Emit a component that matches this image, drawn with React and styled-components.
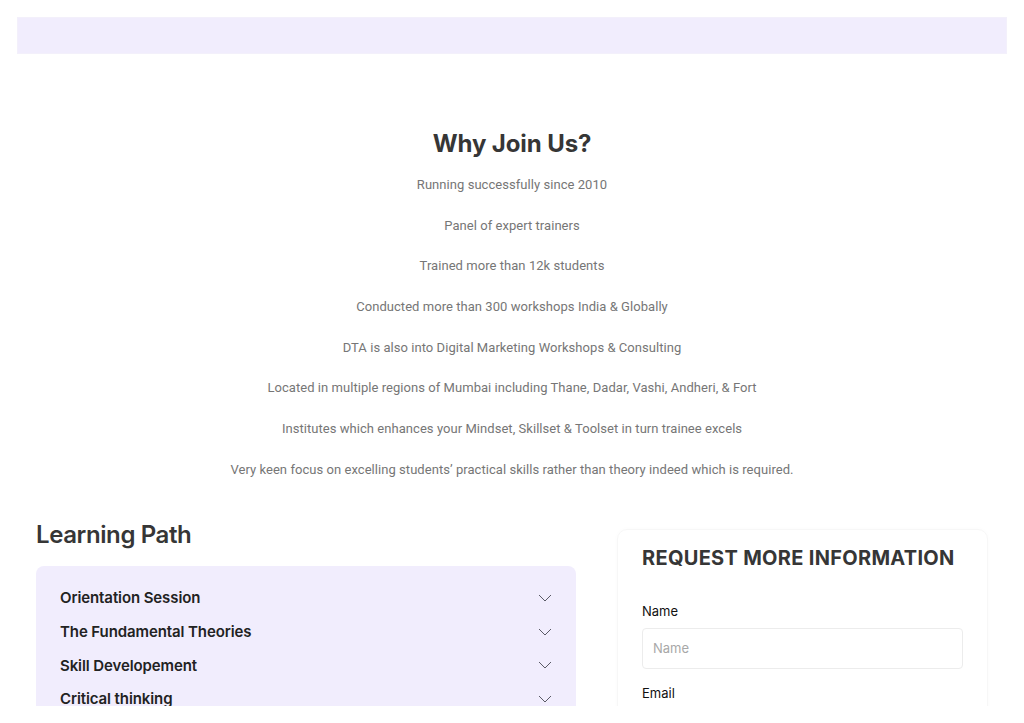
import React from 'react'
import styled, { createGlobalStyle } from 'styled-components';

const Global = createGlobalStyle`
  * { box-sizing: border-box; }
  body {
    margin: 0;
    background: #fff;
    font-family: Roboto, "Liberation Sans", sans-serif;
  }
`;

const Frame = styled.div`
  height: 723px;
  padding: 17px;
`;

const Viewport = styled.div`
  height: 689px;
  overflow: hidden;
`;

const TopBar = styled.div`
  height: 37px;
  background: #f1edfd;
  border: 1px solid #f3f0fb;
`;

const WhySection = styled.section`
  padding-top: 75px;
  text-align: center;
`;

const H2 = styled.h2`
  margin: 0 0 16px;
  font-family: Inter, "Liberation Sans", sans-serif;
  font-size: 24px;
  line-height: 30px;
  font-weight: 700;
  color: #363636;
  letter-spacing: -0.1px;
`;

const Point = styled.p`
  margin: 0 0 20.7px;
  font-size: 13px;
  line-height: 20px;
  color: #767676;
  letter-spacing: 0.05px;
`;

const Columns = styled.div`
  display: grid;
  grid-template-columns: 540px 371px;
  gap: 41px;
  padding: 0 19px;
  margin-top: 40px;
`;

const LeftCol = styled.div`
  display: flex;
  flex-direction: column;
`;

const SectionTitle = styled.h3`
  margin: 0 0 16px;
  font-family: Inter, "Liberation Sans", sans-serif;
  font-size: 24px;
  line-height: 30px;
  font-weight: 600;
  color: #363636;
  letter-spacing: -0.4px;
`;

const Accordion = styled.div`
  background: #f1edfd;
  border-radius: 8px;
  padding: 22px 24px 20px;
  display: flex;
  flex-direction: column;
  gap: 13.7px;
`;

const Item = styled.div`
  display: flex;
  align-items: center;
  justify-content: space-between;
  height: 20px;
  font-family: Inter, "Liberation Sans", sans-serif;
  font-size: 15px;
  font-weight: 600;
  color: #222;
  letter-spacing: -0.1px;
`;

const Chevron = () => (
  <svg width="14" height="8" viewBox="0 0 14 8" fill="none">
    <polyline points="1,1 7,7 13,1" stroke="#5a5a66" strokeWidth="1" />
  </svg>
);

const FormCard = styled.div`
  margin-top: 9px;
  border: 1px solid #f7f7f7;
  border-radius: 10px;
  box-shadow: 0 0 5px rgba(0, 0, 0, 0.02);
  padding: 15px 24px 24px;
`;

const FormTitle = styled.h3`
  margin: 0 0 30px;
  font-family: Inter, "Liberation Sans", sans-serif;
  font-size: 20px;
  line-height: 26px;
  font-weight: 700;
  color: #363636;
  letter-spacing: 0.3px;
`;

const Label = styled.label`
  display: block;
  font-family: Inter, "Liberation Sans", sans-serif;
  font-size: 13px;
  line-height: 20px;
  color: #111;
  margin-bottom: 7px;
`;

const Input = styled.input`
  display: block;
  width: 100%;
  height: 41px;
  border: 1px solid #ececec;
  border-radius: 4px;
  padding: 0 10px;
  font-family: Inter, "Liberation Sans", sans-serif;
  font-size: 13px;
  margin-bottom: 14px;
  outline: none;
  &::placeholder { color: #a8a8a8; }
`;

const points = [
  'Running successfully since 2010',
  'Panel of expert trainers',
  'Trained more than 12k students',
  'Conducted more than 300 workshops India & Globally',
  'DTA is also into Digital Marketing Workshops & Consulting',
  'Located in multiple regions of Mumbai including Thane, Dadar, Vashi, Andheri, & Fort',
  'Institutes which enhances your Mindset, Skillset & Toolset in turn trainee excels',
  'Very keen focus on excelling students’ practical skills rather than theory indeed which is required.',
];

const modules = [
  'Orientation Session',
  'The Fundamental Theories',
  'Skill Developement',
  'Critical thinking',
];

const App = () => {
  return (
    <>
      <Global />
      <Frame>
        <Viewport>
          <TopBar />
          <WhySection>
            <H2>Why Join Us?</H2>
            {points.map((p) => (
              <Point key={p}>{p}</Point>
            ))}
          </WhySection>
          <Columns>
            <LeftCol>
              <SectionTitle>Learning Path</SectionTitle>
              <Accordion>
                {modules.map((m) => (
                  <Item key={m}>
                    {m}
                    <Chevron />
                  </Item>
                ))}
              </Accordion>
            </LeftCol>
            <FormCard>
              <FormTitle>REQUEST MORE INFORMATION</FormTitle>
              <Label>Name</Label>
              <Input placeholder="Name" />
              <Label>Email</Label>
            </FormCard>
          </Columns>
        </Viewport>
      </Frame>
    </>
  )
}

export default App
